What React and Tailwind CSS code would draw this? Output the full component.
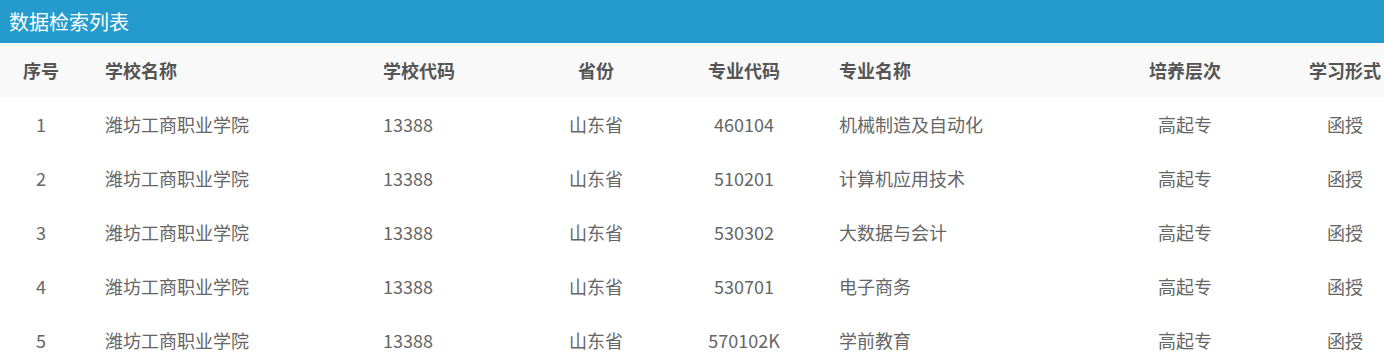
import React from 'react';

const rows = [
  { id: 1, code: '460104', major: '机械制造及自动化' },
  { id: 2, code: '510201', major: '计算机应用技术' },
  { id: 3, code: '530302', major: '大数据与会计' },
  { id: 4, code: '530701', major: '电子商务' },
  { id: 5, code: '570102K', major: '学前教育' },
];

const cols = 'grid grid-cols-[82px_278px_160px_152px_144px_248px_242px_78px]';

const App = () => {
  return (
    <div className="w-[1384px] h-[363px] overflow-hidden bg-white font-['Microsoft_YaHei','Noto_Sans_CJK_SC',sans-serif]">
      <div className="h-[43px] bg-[#259bcd] flex items-center pl-[9px]">
        <h1 className="text-[20px] text-white leading-none">数据检索列表</h1>
      </div>

      <div className={`${cols} h-[54px] items-center bg-[#f9f9f9] text-[18px] font-bold text-[#555]`}>
        <div className="text-center">序号</div>
        <div className="pl-[23px]">学校名称</div>
        <div className="pl-[23px]">学校代码</div>
        <div className="text-center">省份</div>
        <div className="text-center">专业代码</div>
        <div className="pl-[23px]">专业名称</div>
        <div className="text-center">培养层次</div>
        <div className="text-center whitespace-nowrap">学习形式</div>
      </div>

      {rows.map((row) => (
        <div key={row.id} className={`${cols} h-[54px] items-center text-[18px] text-[#666]`}>
          <div className="text-center">{row.id}</div>
          <div className="pl-[23px]">潍坊工商职业学院</div>
          <div className="pl-[23px]">13388</div>
          <div className="text-center">山东省</div>
          <div className="text-center">{row.code}</div>
          <div className="pl-[23px]">{row.major}</div>
          <div className="text-center">高起专</div>
          <div className="text-center">函授</div>
        </div>
      ))}
    </div>
  );
};

export default App;
